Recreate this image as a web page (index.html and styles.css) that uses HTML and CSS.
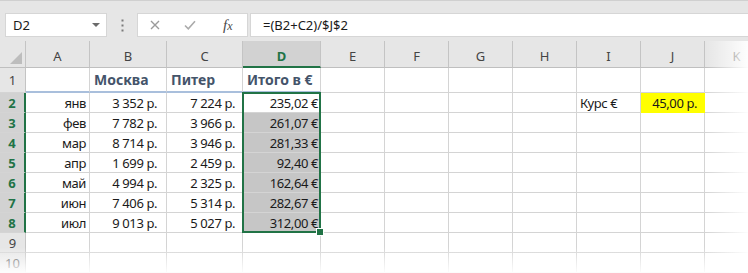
FILE: index.html
```html
<html>
<head>
<meta charset="UTF-8">
<title>Итого в евро</title>
<link rel="stylesheet" href="styles.css">
</head>
<body>
	<div class="bar">
		<div class="namebox"><span>D2</span><i class="drop"></i></div>
		<div class="dots">
			<svg width="3" height="13" viewBox="0 0 3 13"><rect x="0.5" y="0.5" width="2" height="2" fill="#7a7a7a"/><rect x="0.5" y="5.5" width="2" height="2" fill="#7a7a7a"/><rect x="0.5" y="10.5" width="2" height="2" fill="#7a7a7a"/></svg>
		</div>
		<div class="fxbox">
			<svg class="ic-x" width="10" height="10" viewBox="0 0 10 10"><path d="M1 1 L9 9 M9 1 L1 9" stroke="#9b9b9b" stroke-width="1.4" fill="none"/></svg>
			<svg class="ic-ok" width="12" height="10" viewBox="0 0 12 10"><path d="M1 5.5 L4.3 8.8 L11 1.2" stroke="#ababab" stroke-width="1.6" fill="none"/></svg>
			<span class="fx"><i>f</i><i class="sub">x</i></span>
		</div>
		<div class="formula">=(B2+C2)/$J$2</div>
	</div>

	<div class="sheet">
		<div class="grid">
			<!-- column headers -->
			<div class="ch corner"><i class="tri"></i></div>
			<div class="ch">A</div>
			<div class="ch">B</div>
			<div class="ch">C</div>
			<div class="ch on">D</div>
			<div class="ch">E</div>
			<div class="ch">F</div>
			<div class="ch">G</div>
			<div class="ch">H</div>
			<div class="ch">I</div>
			<div class="ch">J</div>
			<div class="ch">K</div>

			<!-- row 1 -->
			<div class="rh">1</div>
			<div class="c h3"></div>
			<div class="c h3">Москва</div>
			<div class="c h3">Питер</div>
			<div class="c h3">Итого в €</div>
			<div class="c"></div><div class="c"></div><div class="c"></div><div class="c"></div><div class="c"></div><div class="c"></div><div class="c"></div>

			<!-- row 2 -->
			<div class="rh on">2</div>
			<div class="c r">янв</div>
			<div class="c r pb">3 352 р.</div>
			<div class="c r pc">7 224 р.</div>
			<div class="c r pd">235,02 €</div>
			<div class="c"></div><div class="c"></div><div class="c"></div><div class="c"></div>
			<div class="c">Курс €</div>
			<div class="c r pc yel">45,00 р.</div>
			<div class="c"></div>

			<!-- row 3 -->
			<div class="rh on">3</div>
			<div class="c r">фев</div>
			<div class="c r pb">7 782 р.</div>
			<div class="c r pc">3 966 р.</div>
			<div class="c r pd sh">261,07 €</div>
			<div class="c"></div><div class="c"></div><div class="c"></div><div class="c"></div><div class="c"></div><div class="c"></div><div class="c"></div>

			<!-- row 4 -->
			<div class="rh on">4</div>
			<div class="c r">мар</div>
			<div class="c r pb">8 714 р.</div>
			<div class="c r pc">3 946 р.</div>
			<div class="c r pd sh">281,33 €</div>
			<div class="c"></div><div class="c"></div><div class="c"></div><div class="c"></div><div class="c"></div><div class="c"></div><div class="c"></div>

			<!-- row 5 -->
			<div class="rh on">5</div>
			<div class="c r">апр</div>
			<div class="c r pb">1 699 р.</div>
			<div class="c r pc">2 459 р.</div>
			<div class="c r pd sh">92,40 €</div>
			<div class="c"></div><div class="c"></div><div class="c"></div><div class="c"></div><div class="c"></div><div class="c"></div><div class="c"></div>

			<!-- row 6 -->
			<div class="rh on">6</div>
			<div class="c r">май</div>
			<div class="c r pb">4 994 р.</div>
			<div class="c r pc">2 325 р.</div>
			<div class="c r pd sh">162,64 €</div>
			<div class="c"></div><div class="c"></div><div class="c"></div><div class="c"></div><div class="c"></div><div class="c"></div><div class="c"></div>

			<!-- row 7 -->
			<div class="rh on">7</div>
			<div class="c r">июн</div>
			<div class="c r pb">7 406 р.</div>
			<div class="c r pc">5 314 р.</div>
			<div class="c r pd sh">282,67 €</div>
			<div class="c"></div><div class="c"></div><div class="c"></div><div class="c"></div><div class="c"></div><div class="c"></div><div class="c"></div>

			<!-- row 8 -->
			<div class="rh on">8</div>
			<div class="c r">июл</div>
			<div class="c r pb">9 013 р.</div>
			<div class="c r pc">5 027 р.</div>
			<div class="c r pd sh">312,00 €</div>
			<div class="c"></div><div class="c"></div><div class="c"></div><div class="c"></div><div class="c"></div><div class="c"></div><div class="c"></div>

			<!-- row 9 -->
			<div class="rh">9</div>
			<div class="c"></div><div class="c"></div><div class="c"></div><div class="c"></div><div class="c"></div><div class="c"></div><div class="c"></div><div class="c"></div><div class="c"></div><div class="c"></div><div class="c"></div>

			<!-- row 10 -->
			<div class="rh">10</div>
			<div class="c"></div><div class="c"></div><div class="c"></div><div class="c"></div><div class="c"></div><div class="c"></div><div class="c"></div><div class="c"></div><div class="c"></div><div class="c"></div><div class="c"></div>

			<!-- selection D2:D8 -->
			<div class="sel"><i class="handle"></i></div>
		</div>
	</div>
</body>
</html>
```

FILE: styles.css
```css
body{
	margin: 0;
	width: 748px;
	height: 273px;
	overflow: hidden;
	background: #fff;
	font-family: "Noto Sans", sans-serif;
	color: #1a1a1a;
}

/* formula bar */
.bar{
	display: flex;
	height: 41px;
	box-sizing: border-box;
	padding-top: 12px;
	background: #e6e6e6;
	border-top: 1px solid #d0d0d0;
}
.namebox{
	margin-left: 5px;
	width: 102px;
	height: 24px;
	box-sizing: border-box;
	background: #fff;
	border: 1px solid #d6d6d6;
	display: flex;
	align-items: center;
	padding-left: 7px;
	font-size: 13px;
}
.drop{
	margin-left: auto;
	margin-right: 6px;
	border-left: 4px solid transparent;
	border-right: 4px solid transparent;
	border-top: 4px solid #6b6b6b;
}
.dots{
	width: 30px;
	height: 24px;
	display: flex;
	justify-content: center;
	align-items: center;
}
.fxbox{
	width: 111px;
	height: 24px;
	box-sizing: border-box;
	background: #fff;
	border: 1px solid #d6d6d6;
	display: flex;
	align-items: center;
	padding-left: 12px;
}
.ic-x{
	margin-right: 24px;
}
.ic-ok{
	margin-right: 27px;
}
.fx{
	font-family: "Liberation Serif", serif;
	font-style: italic;
	color: #4a4a4a;
	font-size: 15px;
}
.fx i{
	font-style: italic;
}
.fx .sub{
	font-size: 12px;
}
.formula{
	margin-left: 2px;
	flex: 1;
	height: 24px;
	box-sizing: border-box;
	background: #fff;
	border: 1px solid #d6d6d6;
	border-right: none;
	padding-left: 12px;
	font-size: 13px;
	line-height: 22px;
}

/* sheet */
.sheet{
	position: relative;
	overflow: hidden;
}
.sheet::before{
	content: "";
	position: absolute;
	left: 0;
	right: 0;
	bottom: 0;
	height: 26px;
	background: linear-gradient(rgba(255,255,255,0), rgba(255,255,255,0.95));
	z-index: 3;
}
.sheet::after{
	content: "";
	position: absolute;
	top: 0;
	bottom: 0;
	right: 0;
	width: 42px;
	background: linear-gradient(to right, rgba(255,255,255,0), rgba(255,255,255,0.95));
	z-index: 3;
}
.grid{
	position: relative;
	display: grid;
	grid-template-columns: 26px 64px 77px 76px 78px repeat(7, 64px);
	grid-template-rows: 27px 25px repeat(9, 20px);
	font-size: 13px;
}
.grid > div{
	box-sizing: border-box;
	white-space: nowrap;
	display: flex;
	align-items: center;
}

.ch{
	background: #e6e6e6;
	border-right: 1px solid #c4c4c4;
	border-bottom: 1px solid #bfbfbf;
	justify-content: center;
	padding-top: 4px;
	color: #444;
}
.ch.on{
	background: #d2d2d2;
	color: #217346;
	font-weight: bold;
	border-bottom: 2px solid #217346;
}
.corner{
	justify-content: flex-end !important;
	align-items: flex-end !important;
	padding: 0 3px 3px 0;
}
.tri{
	border-left: 12px solid transparent;
	border-bottom: 12px solid #bdbdbd;
}

.rh{
	background: #e6e6e6;
	border-right: 1px solid #c4c4c4;
	border-bottom: 1px solid #d4d4d4;
	justify-content: center;
	color: #444;
}
.rh.on{
	background: #d2d2d2;
	color: #217346;
	font-weight: bold;
	border-right: 2px solid #217346;
}

.c{
	border-right: 1px solid #d4d4d4;
	border-bottom: 1px solid #d4d4d4;
	padding: 0 3px;
	letter-spacing: -0.4px;
}
.r{
	justify-content: flex-end;
}
.pb{
	padding-right: 9px;
}
.pc{
	padding-right: 7px;
}
.pd{
	padding-right: 2px;
}
.h3{
	font-size: 14px;
	font-weight: bold;
	color: #44546a;
	letter-spacing: 0;
	border-bottom: 2px solid #a9bfdc;
	padding-left: 4px;
}
.sh{
	background: #c6c6c6;
}
.yel{
	background: #ffff00;
	border-color: transparent;
}

.sel{
	position: absolute;
	grid-column: 5 / 6;
	grid-row: 3 / 10;
	top: -1px;
	left: -1px;
	right: 0;
	bottom: 0;
	border: 2px solid #217346;
	z-index: 2;
}
.handle{
	position: absolute;
	right: -5px;
	bottom: -5px;
	width: 6px;
	height: 6px;
	background: #217346;
	border: 1px solid #fff;
}
```
